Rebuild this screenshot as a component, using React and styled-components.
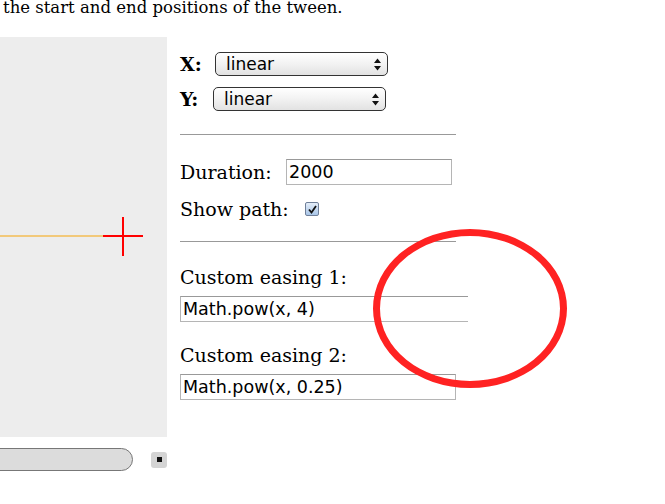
import React from 'react';
import styled, { createGlobalStyle } from 'styled-components';

const Global = createGlobalStyle`
    body {
        margin: 0;
        background: #fff;
        font-family: "DejaVu Serif", Georgia, serif;
        color: #000;
    }
`
const Page = styled.div`
    position: relative;
    width: 665px;
    height: 504px;
    overflow: hidden;
`
const Intro = styled.p`
    margin: -2px 0 0 3px;
    height: 20px;
    font-size: 16.5px;
    line-height: 20px;
    white-space: nowrap;
`
const Main = styled.div`
    display: flex;
    margin-top: 19px;
`
const Stage = styled.div`
    width: 167px;
    flex: none;
    display: flex;
    flex-direction: column;
`
const Canvas = styled.div`
    height: 400px;
    background: #ededed;
`
const Controls = styled.div`
    display: flex;
    align-items: center;
    margin-top: 11px;
`
const Track = styled.div`
    width: 144px;
    height: 23px;
    margin-left: -10px;
    border: 1px solid #777;
    border-radius: 0 12px 12px 0;
    background: #dcdcdc;
    box-sizing: border-box;
`
const StopButton = styled.div`
    width: 16px;
    height: 16px;
    margin-left: 18px;
    border-radius: 3px;
    background: #d4d4d4;
    display: flex;
    align-items: center;
    justify-content: center;
    &::after {
        content: '';
        width: 5px;
        height: 5px;
        background: #111;
    }
`
const Panel = styled.div`
    padding: 15px 0 0 13px;
    width: 290px;
    display: flex;
    flex-direction: column;
    align-items: flex-start;
`
const Row = styled.div`
    display: flex;
    align-items: center;
    height: ${p => p.h || 26}px;
    margin-top: ${p => p.top || 0}px;
`
const Label = styled.span`
    font-size: 19px;
    line-height: 22px;
    font-weight: ${p => (p.bold ? 700 : 400)};
    width: ${p => p.width}px;
    flex: none;
`
const Select = styled.div`
    width: 173px;
    height: 24px;
    border: 1px solid #333;
    border-radius: 5px;
    background: linear-gradient(#ffffff, #f2f2f2 50%, #e2e2e2);
    display: flex;
    align-items: center;
    justify-content: space-between;
    padding: 0 5px 0 10px;
    box-sizing: border-box;
    font-family: "DejaVu Sans", sans-serif;
    font-size: 17px;
`
const Rule = styled.hr`
    margin: ${p => p.top}px 0 0;
    width: 276px;
    border: 0;
    border-top: 1px solid #999;
`
const TextInput = styled.input`
    box-sizing: border-box;
    width: ${p => p.width}px;
    height: 26px;
    margin-top: ${p => p.top || 0}px;
    border: 1px solid #b5b5b5;
    border-top-color: #999;
    ${p => p.open && 'border-right: none;'}
    padding: 0 2px;
    font-family: "DejaVu Sans", sans-serif;
    font-size: 17.5px;
    color: #000;
    outline: none;
`
const Check = styled.span`
    width: 14px;
    height: 14px;
    border: 1px solid #6f7f99;
    border-radius: 2px;
    background: linear-gradient(#e4edf8, #a9c6e8);
    display: flex;
    align-items: center;
    justify-content: center;
    box-sizing: border-box;
`
const Heading = styled.div`
    font-size: 19px;
    line-height: 22px;
    margin-top: ${p => p.top}px;
`
const Ring = styled.div`
    position: absolute;
    left: 373px;
    top: 229px;
    width: 194px;
    height: 159px;
    border: 7px solid #ff2222;
    border-radius: 50%;
    box-sizing: border-box;
`

const Arrows = () => (
    <svg width="9" height="15" viewBox="0 0 9 15">
        <path d="M4.5 1.5 L8 6 H1 Z M4.5 13.5 L8 9 H1 Z" fill="#111" />
    </svg>
)

const App = () => (
    <Page>
        <Global />
        <Intro>the start and end positions of the tween.</Intro>
        <Main>
            <Stage>
                <Canvas>
                    <svg width="167" height="400">
                        <line x1="0" y1="199" x2="103" y2="199" stroke="#f2c97a" strokeWidth="2" />
                        <line x1="103" y1="199" x2="143" y2="199" stroke="#ff0000" strokeWidth="2" />
                        <line x1="123" y1="180" x2="123" y2="219" stroke="#ff0000" strokeWidth="2" />
                    </svg>
                </Canvas>
                <Controls>
                    <Track />
                    <StopButton />
                </Controls>
            </Stage>
            <Panel>
                <Row h={24}>
                    <Label bold width={35}>X:</Label>
                    <Select>linear<Arrows /></Select>
                </Row>
                <Row h={24} top={11}>
                    <Label bold width={33}>Y:</Label>
                    <Select>linear<Arrows /></Select>
                </Row>
                <Rule top={23} />
                <Row top={24}>
                    <Label width={106}>Duration:</Label>
                    <TextInput width={166} defaultValue="2000" />
                </Row>
                <Row top={11}>
                    <Label width={125}>Show path:</Label>
                    <Check>
                        <svg width="9" height="9" viewBox="0 0 9 9">
                            <path d="M1 4.5 L3.5 7.5 L8 1" stroke="#111" strokeWidth="1.8" fill="none" />
                        </svg>
                    </Check>
                </Row>
                <Rule top={19} />
                <Heading top={24}>Custom easing 1:</Heading>
                <TextInput open top={8} width={288} defaultValue="Math.pow(x, 4)" />
                <Heading top={22}>Custom easing 2:</Heading>
                <TextInput top={8} width={276} defaultValue="Math.pow(x, 0.25)" />
            </Panel>
        </Main>
        <Ring />
    </Page>
)

export default App;
